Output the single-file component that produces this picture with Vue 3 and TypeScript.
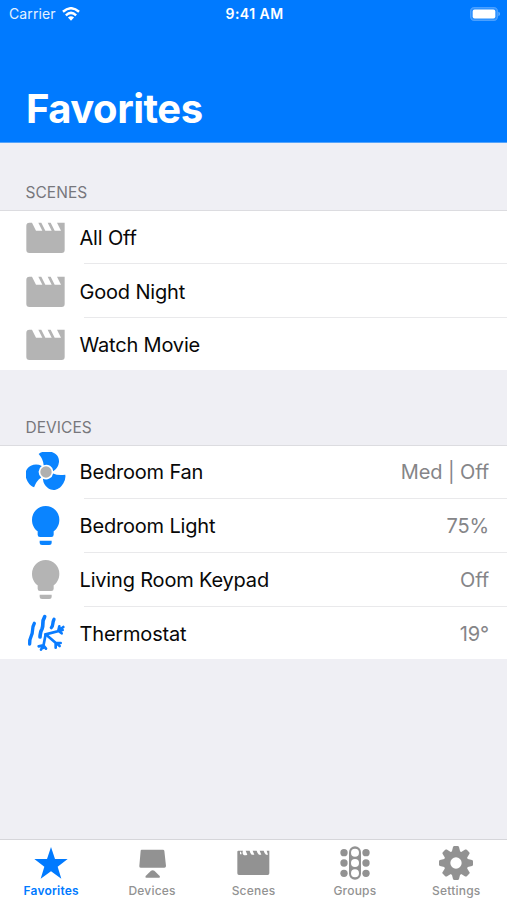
<script setup lang="ts">
interface Device {
  name: string
  value: string
  icon: 'fan' | 'bulb' | 'climate'
  on: boolean
}
interface Tab {
  name: string
  icon: string
}

const scenes: string[] = ['All Off', 'Good Night', 'Watch Movie']
const devices: Device[] = [
  { name: 'Bedroom Fan', value: 'Med | Off', icon: 'fan', on: true },
  { name: 'Bedroom Light', value: '75%', icon: 'bulb', on: true },
  { name: 'Living Room Keypad', value: 'Off', icon: 'bulb', on: false },
  { name: 'Thermostat', value: '19°', icon: 'climate', on: true },
]
const tabs: Tab[] = [
  { name: 'Favorites', icon: 'star' },
  { name: 'Devices', icon: 'screen' },
  { name: 'Scenes', icon: 'clapper' },
  { name: 'Groups', icon: 'groups' },
  { name: 'Settings', icon: 'gear' },
]
const bladeAngles = [0, 120, 240]
const toothAngles = [0, 45, 90, 135, 180, 225, 270, 315]
const lampRows = [20, 51, 82]
</script>

<template>
  <div class="screen">
    <header class="header">
      <div class="status">
        <div class="carrier">
          <span>Carrier</span>
          <svg class="wifi" viewBox="0 0 56 42">
            <g fill="none" stroke="#fff" stroke-width="7.500">
              <path d="M3 14Q28 -8 53 14" />
              <path d="M12 25Q28 10 44 25" />
            </g>
            <path d="M28 42L18.500 32Q28 24 37.500 32Z" fill="#fff" />
          </svg>
        </div>
        <span class="time">9:41 AM</span>
        <svg class="battery" viewBox="0 0 30 14">
          <rect x=".6" y=".6" width="26.800" height="12.800" rx="3.600" fill="#2b90ff" stroke="#4aa0ff" stroke-width="1.200" />
          <rect x="2.700" y="2.400" width="22.600" height="9.200" rx="2" fill="#fff" />
          <path d="M28.400 4.800Q30 5.400 30 7T28.400 9.200Z" fill="#67b0ff" />
        </svg>
      </div>
      <h1>Favorites</h1>
    </header>

    <main>
      <h2 class="first">SCENES</h2>
      <ul class="scenes">
        <li v-for="s in scenes" :key="s">
          <svg class="icon off" viewBox="18 19 120 120">
            <path d="M28 33H36L48 57H67L55 33H64L76 57H95L83 33H92L104 57H123L111 33H134V115Q134 124 125 124H28Q19 124 19 115V42Q19 33 28 33Z" />
          </svg>
          <div class="cell">
            <span class="name">{{ s }}</span>
          </div>
        </li>
      </ul>

      <h2 class="second">DEVICES</h2>
      <ul class="devices">
        <li v-for="d in devices" :key="d.name">
          <svg v-if="d.icon === 'fan'" class="icon" viewBox="18 22 120 120">
            <path
              v-for="a in bladeAngles"
              :key="a"
              :transform="`rotate(${a} 78 82)`"
              d="M56 28Q65 20 81 20C105 20 118 34 117 52Q115 70 100 80A21.500 21.500 0 0 0 71 61.500Q70 44 56 28Z"
            />
            <circle class="hub" cx="78" cy="82" r="17" />
          </svg>
          <svg v-else-if="d.icon === 'bulb'" class="icon" :class="{ off: !d.on }" viewBox="18 182 120 120">
            <path d="M77 182A41 41 0 0 1 118 223C118 240 110 251 101 258V268Q101 275 94 275H60Q53 275 53 268V258C44 251 36 240 36 223A41 41 0 0 1 77 182Z" />
            <path d="M59 286H95V293Q95 299 88 299H66Q59 299 59 293Z" />
          </svg>
          <svg v-else class="icon" viewBox="18 175 120 120">
            <g class="lines">
              <path stroke-width="10" d="M43 203C34 218 41 226 34 240C29 250 28 255 29 265" />
              <path stroke-width="11" d="M74 183C64 199 72 207 66 220C60 229 61 235 60 244" />
              <path stroke-width="10" d="M102 191C96 202 101 209 94 216" />
              <g stroke-width="8">
                <path d="M77 236L69 277M56 272L70 269L78 279M63 282L69 272" />
                <path d="M77 236L111 265M107 276V262L122 262M109 263L119 271" />
                <path d="M77 236L128 223M118 212L115 225L125 233M117 224L130 214" />
              </g>
            </g>
          </svg>
          <div class="cell">
            <span class="name">{{ d.name }}</span>
            <span class="value">{{ d.value }}</span>
          </div>
        </li>
      </ul>
    </main>

    <nav>
      <a v-for="(t, i) in tabs" :key="t.name" :class="{ active: i === 0 }">
        <svg v-if="t.icon === 'star'" viewBox="0 0 108 108">
          <path d="M54 3L66 39H104L74 62L85 98L54 76L23 98L34 62L4 39H42Z" />
        </svg>
        <svg v-else-if="t.icon === 'screen'" viewBox="0 0 108 108">
          <path d="M23 11H87Q90 11 91 14L96 60Q96 65 91 65H20Q15 65 16 60L20 14Q20 11 23 11Z" />
          <path d="M51 74Q56 71 61 74L77 90Q80 95 75 95H37Q32 95 35 90Z" />
        </svg>
        <svg v-else-if="t.icon === 'clapper'" viewBox="0 0 108 108">
          <path d="M10 14H24Q21 20 25 26Q30 29 37 26L32 14H44Q45 21 50 26H58L53 14H65Q67 22 72 26H79L74 14H86Q88 22 93 26H99L95 14H103V82Q103 87 98 87H12Q7 87 7 82V17Q7 14 10 14ZM15 17V25H20L18 17Z" fill-rule="evenodd" />
        </svg>
        <svg v-else-if="t.icon === 'groups'" viewBox="0 0 108 108">
          <rect x="36" y="1" width="36" height="100" rx="18" />
          <g v-for="y in lampRows" :key="y">
            <circle class="lamp" cx="54" :cy="y" r="12" />
            <circle cx="21" :cy="y" r="11" />
            <circle cx="87" :cy="y" r="11" />
          </g>
        </svg>
        <svg v-else viewBox="0 0 108 108">
          <path d="M54 14A37 37 0 1 0 54 88A37 37 0 1 0 54 14ZM54 34A17 17 0 1 1 54 68A17 17 0 1 1 54 34Z" fill-rule="evenodd" />
          <path v-for="a in toothAngles" :key="a" :transform="`rotate(${a} 54 51)`" d="M41 19L45 3Q46 0 49 0H59Q62 0 63 3L67 19Z" />
        </svg>
        <span>{{ t.name }}</span>
      </a>
    </nav>
  </div>
</template>

<style>
body {
  margin: 0;
}
</style>

<style scoped>
.screen {
  width: 507px;
  height: 900px;
  display: flex;
  flex-direction: column;
  overflow: hidden;
  background: #efeff4;
  font-family: Inter, "Liberation Sans", sans-serif;
  color: #080808;
}
.header {
  height: 143px;
  box-sizing: border-box;
  border-bottom: 1px solid #55a4fb;
  background: #007aff;
  color: #fff;
  flex: none;
}
.status {
  height: 27px;
  padding: 0 7px 0 9px;
  display: grid;
  grid-template-columns: 1fr auto 1fr;
  align-items: center;
}
.carrier {
  display: flex;
  align-items: center;
  gap: 6px;
  font-size: 14px;
  letter-spacing: 0.1px;
  color: #e4f1ff;
}
.wifi {
  width: 18px;
  height: 14px;
}
.time {
  font-size: 14px;
  font-weight: 600;
  letter-spacing: 0.45px;
}
.battery {
  width: 30px;
  height: 14px;
  justify-self: end;
}
h1 {
  margin: 0;
  padding: 57px 0 0 26px;
  font-size: 40px;
  line-height: 50px;
  font-weight: 700;
  letter-spacing: -0.5px;
}
main {
  flex: 1;
}
h2 {
  margin: 0;
  padding: 0 0 7px 25.500px;
  font-size: 15.500px;
  line-height: 20px;
  font-weight: 400;
  letter-spacing: 0.05px;
  color: #77777c;
}
.first {
  padding-top: 40px;
}
.second {
  padding-top: 47.600px;
}
ul {
  box-sizing: border-box;
  margin: 0;
  padding: 0;
  list-style: none;
  background: #fff;
  border-top: 1px solid #dcdce0;
}
.scenes {
  height: 160px;
}
.devices {
  height: 214px;
}
li {
  height: 53.800px;
  display: flex;
  align-items: center;
  padding-left: 26px;
}
.icon {
  width: 40px;
  height: 40px;
  margin-right: 13.500px;
  flex: none;
  fill: #0a84ff;
}
.icon.off {
  fill: #b4b4b4;
}
.hub {
  fill: #b0b0b0;
}
.lines {
  fill: none;
  stroke: #0a7cff;
  stroke-linecap: round;
  stroke-linejoin: round;
}
.cell {
  flex: 1;
  height: 100%;
  display: flex;
  align-items: center;
  justify-content: space-between;
  padding-right: 18px;
  font-size: 20px;
  background: linear-gradient(#e9e9eb, #e9e9eb) 4px calc(100% - 0.400px) / 100% 1px no-repeat;
}
li:last-child .cell {
  background: none;
}
.name {
  letter-spacing: -0.18px;
}
.value {
  color: #858588;
  letter-spacing: -0.1px;
}
nav {
  height: 60px;
  flex: none;
  display: grid;
  grid-template-columns: repeat(5, 1fr);
  background: #fff;
  border-top: 1px solid #d6d6da;
}
nav a {
  display: flex;
  flex-direction: column;
  align-items: center;
  padding-top: 6px;
  color: #929292;
  fill: currentColor;
}
nav svg {
  width: 36px;
  height: 36px;
}
nav span {
  padding-top: 1px;
  font-size: 12px;
  line-height: 16px;
  font-weight: 500;
  letter-spacing: 0.2px;
}
.lamp {
  fill: #fff;
}
nav .active {
  color: #007aff;
}
nav .active span {
  padding-left: 1px;
  font-weight: 600;
}
</style>
